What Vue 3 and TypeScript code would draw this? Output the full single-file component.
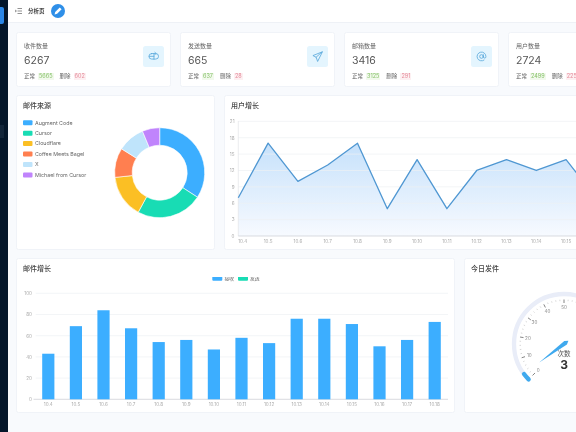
<script setup lang="ts">
interface Stat { title: string; total: number; ok: number; del: number; icon: string }
const stats: Stat[] = [
  { title: '收件数量', total: 6267, ok: 5665, del: 602, icon: 'in' },
  { title: '发送数量', total: 665, ok: 637, del: 28, icon: 'send' },
  { title: '邮箱数量', total: 3416, ok: 3125, del: 291, icon: 'at' },
  { title: '用户数量', total: 2724, ok: 2499, del: 225, icon: 'user' },
]

const legendItems = [
  { name: 'Augment Code', color: '#3caeff', to: 123 },
  { name: 'Cursor', color: '#18dcb4', to: 208.5 },
  { name: 'Cloudflare', color: '#fbbf24', to: 264 },
  { name: 'Coffee Meets Bagel', color: '#ff7f50', to: 302 },
  { name: 'X', color: '#bfe4fb', to: 337.5 },
  { name: 'Michael from Cursor', color: '#c084fc', to: 360 },
]
const polar = (cx: number, cy: number, r: number, deg: number): [number, number] => {
  const a = (deg - 90) * Math.PI / 180
  return [cx + r * Math.cos(a), cy + r * Math.sin(a)]
}
const sector = (from: number, to: number): string => {
  const cx = 159.7, cy = 172.7, R = 45, r = 27.5
  const large = to - from > 180 ? 1 : 0
  const [a, b] = polar(cx, cy, R, from)
  const [c, d] = polar(cx, cy, R, to)
  const [e, f] = polar(cx, cy, r, to)
  const [g, h] = polar(cx, cy, r, from)
  return `M${a} ${b}A${R} ${R} 0 ${large} 1 ${c} ${d}L${e} ${f}A${r} ${r} 0 ${large} 0 ${g} ${h}Z`
}
const donut = legendItems.map((it, i) => ({
  ...it,
  d: sector(i === 0 ? 0 : legendItems[i - 1].to, it.to),
  y: 122.7 + i * 10.45,
}))

const dates = Array.from({ length: 15 }, (_, i) => `10.${i + 4}`)

const lineVals = [7, 17, 10, 13, 17, 5, 14, 5, 12, 14, 12, 14, 7, 10, 9]
const lx = (i: number) => 238.3 + i * 29.8
const ly = (v: number) => 236 - v * 5.46
const linePts = lineVals.map((v, i) => `${lx(i)},${ly(v)}`).join(' ')
const areaPts = `${lx(0)},236 ${linePts} ${lx(14)},236`
const lineTicks = [0, 3, 6, 9, 12, 15, 18, 21]

const barVals = [43, 69, 84, 67, 54, 56, 47, 58, 53, 76, 76, 71, 50, 56, 73]
const bx = (i: number) => 48.3 + i * 27.6
const by = (v: number) => 399.3 - v * 1.06
const barTicks = [0, 20, 40, 60, 80, 100]

// Gauge
const gx = 564, gy = 344
const ang = (v: number) => -135 + v * 2.7
const arcPath = (r: number, from: number, to: number): string => {
  const [a, b] = polar(gx, gy, r, from)
  const [c, d] = polar(gx, gy, r, to)
  return `M${a} ${b}A${r} ${r} 0 ${to - from > 180 ? 1 : 0} 1 ${c} ${d}`
}
const trackPath = arcPath(50, ang(0), ang(100))
const progressPath = arcPath(50, ang(0), ang(3))
const gaugeTicks = Array.from({ length: 51 }, (_, i) => {
  const v = i * 2
  const major = v % 10 === 0
  const [x1, y1] = polar(gx, gy, 44.5, ang(v))
  const [x2, y2] = polar(gx, gy, major ? 41 : 43, ang(v))
  return { x1, y1, x2, y2, major }
})
const gaugeLabels = Array.from({ length: 11 }, (_, i) => {
  const [x, y] = polar(gx, gy, 36.5, ang(i * 10))
  return { x, y, t: String(i * 10) }
})
const needle = (): string => {
  const a = ang(3)
  const rad = (a - 90) * Math.PI / 180
  const ux = Math.cos(rad), uy = Math.sin(rad)
  const at = (along: number, side: number): string =>
    `${gx + ux * along - uy * side},${gy + uy * along + ux * side}`
  return [at(31, 0), at(-2, 2.2), at(-5.5, 0), at(-2, -2.2)].join(' ')
}
</script>

<template>
  <div class="app">
    <aside class="side">
      <div class="side-active"></div>
      <div class="side-faint"></div>
    </aside>
    <main class="main">
      <header class="top">
        <svg class="menu" viewBox="0 0 7 6" width="7" height="6">
          <path d="M2.5 .5H7M2.5 3H7M2.5 5.500H7" stroke="#777" stroke-width=".8" fill="none" />
          <path d="M.3 1.500V4.500L1.800 3Z" fill="#777" />
        </svg>
        <span class="page">分析页</span>
        <span class="edit">
          <svg viewBox="0 0 14 14" width="14" height="14">
            <path d="M3.600 10.400l.6-2.500 4.500-4.500 1.900 1.900-4.500 4.500z" fill="#fff" />
          </svg>
        </span>
      </header>

      <div class="content">
        <section class="row stats">
          <article v-for="s in stats" :key="s.title" class="card stat">
            <div class="stat-text">
              <div class="stat-title">{{ s.title }}</div>
              <div class="stat-total">{{ s.total }}</div>
              <div class="stat-sub">
                <span>正常</span><b class="tag ok">{{ s.ok }}</b>
                <span class="del">删除</span><b class="tag bad">{{ s.del }}</b>
              </div>
            </div>
            <div class="stat-icon">
              <svg viewBox="0 0 12 12" width="11" height="11" fill="none" stroke="#5aa9dc" stroke-width=".9" stroke-linejoin="round" stroke-linecap="round">
                <template v-if="s.icon === 'in'">
                  <path d="M4 2.800H8.500a2.600 2.600 0 0 1 0 6H4a2.600 2.600 0 0 1 0-6zM1.500 5.800H6.500M6.500 2.800V9" />
                  <path d="M7.500 1.500l1.500 1.300-1.500 1" />
                </template>
                <path v-else-if="s.icon === 'send'" d="M11 1 1 5l3.500 1.800L6 11zM4.500 6.800 11 1" />
                <template v-else-if="s.icon === 'at'">
                  <circle cx="6" cy="6" r="2" />
                  <path d="M8 4v2.600a1.400 1.400 0 0 0 2.800-.6A4.800 4.800 0 1 0 8.800 9.900" />
                </template>
                <template v-else>
                  <circle cx="6" cy="4" r="2.500" />
                  <path d="M1.500 11a4.500 4.500 0 0 1 9 0" />
                </template>
              </svg>
            </div>
          </article>
        </section>

        <section class="row charts">
          <article class="card small">
            <h3>邮件来源</h3>
            <svg class="chart" viewBox="17 114 197 135" width="197" height="135">
              <g v-for="it in donut" :key="it.name">
                <rect :x="23" :y="it.y - 2.500" width="9.500" height="5" rx="1" :fill="it.color" />
                <text x="35" :y="it.y + 1.800" class="legend">{{ it.name }}</text>
                <path :d="it.d" :fill="it.color" stroke="#fff" stroke-width=".6" />
              </g>
            </svg>
          </article>
          <article class="card wide">
            <h3>用户增长</h3>
            <svg class="chart" viewBox="225 114 437 135" width="437" height="135">
              <defs>
                <linearGradient id="area" x1="0" y1="0" x2="0" y2="1">
                  <stop offset="0" stop-color="#c6e1fb" />
                  <stop offset="1" stop-color="#f7faff" />
                </linearGradient>
              </defs>
              <polygon :points="areaPts" fill="url(#area)" />
              <g v-for="t in lineTicks" :key="t">
                <line v-if="t" x1="238.300" x2="655" :y1="ly(t)" :y2="ly(t)" class="grid" />
                <text x="234.500" :y="ly(t) + 1.800" text-anchor="end" class="axis">{{ t }}</text>
              </g>
              <line x1="238.300" x2="238.300" y1="121" y2="236" stroke="#e2e4e8" stroke-width=".7" />
              <line x1="238.300" x2="655" y1="236" y2="236" stroke="#c9ccd2" stroke-width=".7" />
              <polyline :points="linePts" fill="none" stroke="#4f97d2" stroke-width="1.300" stroke-linejoin="round" />
              <text v-for="(d, i) in dates" :key="d" :x="i === 0 ? 242.700 : lx(i)" y="243" text-anchor="middle" class="axis">{{ d }}</text>
            </svg>
          </article>
        </section>

        <section class="row charts">
          <article class="card wide">
            <h3>邮件增长</h3>
            <svg class="chart" viewBox="17 277 437 135" width="437" height="135">
              <rect x="212.300" y="275.800" width="10" height="5" rx="1" fill="#3caeff" />
              <text x="224.500" y="280.200" class="legend tiny">接收</text>
              <rect x="238" y="275.800" width="10" height="5" rx="1" fill="#18dcb4" />
              <text x="250" y="280.200" class="legend tiny">发送</text>
              <g v-for="t in barTicks" :key="t">
                <line v-if="t" x1="35.700" x2="448" :y1="by(t)" :y2="by(t)" class="grid" />
                <text x="32" :y="by(t) + 1.800" text-anchor="end" class="axis">{{ t }}</text>
              </g>
              <line x1="33.500" x2="448" y1="399.300" y2="399.300" stroke="#c9ccd2" stroke-width=".7" />
              <g v-for="(v, i) in barVals" :key="i">
                <rect :x="bx(i) - 6.100" :y="by(v)" width="12.200" :height="v * 1.060" fill="#3caeff" />
                <text :x="bx(i)" y="406" text-anchor="middle" class="axis">{{ dates[i] }}</text>
              </g>
            </svg>
          </article>
          <article class="card small">
            <h3>今日发件</h3>
            <svg class="chart" viewBox="465 277 197 135" width="197" height="135">
              <path :d="trackPath" fill="none" stroke="#e9edf8" stroke-width="4.300" />
              <path :d="progressPath" fill="none" stroke="#3fa9ee" stroke-width="4.300" stroke-linecap="round" />
              <line v-for="(t, i) in gaugeTicks" :key="i" :x1="t.x1" :y1="t.y1" :x2="t.x2" :y2="t.y2"
                :stroke="t.major ? '#777' : '#aaa'" :stroke-width="t.major ? .9 : .45" />
              <text v-for="l in gaugeLabels" :key="l.t" :x="l.x" :y="l.y + 1.800" text-anchor="middle" class="axis gauge-num">{{ l.t }}</text>
              <polygon :points="needle()" fill="#3fa9ee" />
              <text x="564" y="356" text-anchor="middle" class="g-name">次数</text>
              <text x="564" y="368.500" text-anchor="middle" class="g-val">3</text>
            </svg>
          </article>
        </section>
      </div>
    </main>
  </div>
</template>

<style>
html, body { margin: 0; overflow: hidden; }
</style>

<style scoped>
.app {
  display: flex;
  width: 576px;
  height: 432px;
  overflow: hidden;
  background: #f8fafd;
  font-family: Inter, "Noto Sans CJK SC", sans-serif;
  filter: blur(0.45px);
}
.side {
  flex: 0 0 8px;
  background: #04162a;
  display: flex;
  flex-direction: column;
  padding-top: 7px;
  box-sizing: border-box;
}
.side-active { width: 4px; height: 17px; background: #2b86e6; border-radius: 0 2px 2px 0; }
.side-faint { width: 4px; height: 13px; margin-top: 101px; background: #12253a; }
.main { flex: 0 0 664px; display: flex; flex-direction: column; }
.top {
  height: 23px;
  box-sizing: border-box;
  background: #fff;
  border-bottom: 1px solid #eef1f6;
  display: flex;
  align-items: center;
  padding-left: 7px;
}
.menu { margin-right: 6px; }
.page { font-size: 5.500px; font-weight: 600; color: #444; width: 23px; }
.edit { width: 14px; height: 14px; border-radius: 50%; background: #2f8fe8; display: flex; }
.content { display: flex; flex-direction: column; gap: 8px; padding: 9px 0 0 8px; }
.row { display: flex; gap: 9px; }
.card {
  box-sizing: border-box;
  background: #fff;
  border: 1px solid #f0f3f8;
  border-radius: 2.500px;
}
.stat {
  flex: 0 0 155px;
  height: 55px;
  display: flex;
  align-items: flex-start;
  justify-content: space-between;
  padding: 8.500px 6px 0 7px;
}
.stat-title { font-size: 6px; line-height: 8px; color: #666; }
.stat-total { font-size: 10.500px; line-height: 14px; margin-top: 4.500px; color: #555; }
.stat-sub { display: flex; align-items: center; font-size: 5.500px; line-height: 7px; margin-top: 5px; color: #666; }
.del { margin-left: 6px; }
.tag { font-weight: 400; margin-left: 3px; padding: 0 1px; }
.ok { color: #86c268; background: #f2f9ed; }
.bad { color: #e58a99; background: #fdf0f2; }
.stat-icon {
  width: 21px;
  height: 21px;
  margin-top: 4px;
  border-radius: 2.500px;
  background: #e4f5fe;
  display: flex;
  align-items: center;
  justify-content: center;
}
.charts { height: 155px; }
.small { flex: 0 0 199px; }
.wide { flex: 0 0 439px; }
h3 {
  margin: 0;
  height: 18px;
  box-sizing: border-box;
  padding: 4.500px 0 0 6px;
  font-size: 7px;
  line-height: 9px;
  font-weight: 500;
  color: #444;
}
.chart { display: block; }
.legend { font-size: 5.300px; fill: #666; }
.tiny { font-size: 4.800px; }
.axis { font-size: 4.600px; fill: #aaa; }
.gauge-num { fill: #888; }
.grid { stroke: #eef0f4; stroke-width: 0.700; }
.g-name { font-size: 6.500px; fill: #555; }
.g-val { font-size: 12px; font-weight: 700; fill: #333; }
</style>
